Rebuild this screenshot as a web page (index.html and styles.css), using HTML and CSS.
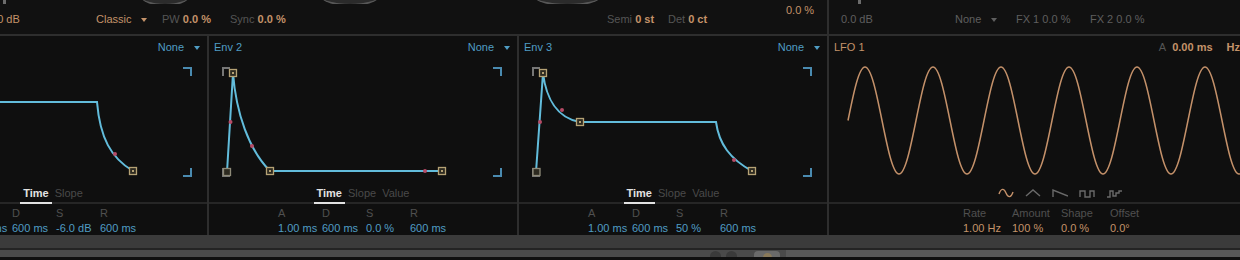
FILE: index.html
```html
<!DOCTYPE html>
<html lang="en">
<head>
<meta charset="UTF-8">
<meta name="viewport" content="width=device-width, initial-scale=1.0">
<title>Wavetable - Modulation</title>
<link rel="stylesheet" href="styles.css">
</head>
<body>
  <div class="top">
    <div class="osc">
      <div class="strip">
        <span class="tick"></span>
        <span class="knob knob-a"></span>
        <span class="knob knob-b"></span>
        <span class="knob knob-c"></span>
      </div>
      <div class="osc-row">
        <span class="val">0.0 dB</span>
        <span class="val">Classic<i class="arrow"></i></span>
        <span><span class="lbl">PW</span> <b class="val">0.0 %</b></span>
        <span><span class="lbl">Sync</span> <b class="val">0.0 %</b></span>
        <span><span class="lbl">Semi</span> <b class="val">0 st</b></span>
        <span><span class="lbl">Det</span> <b class="val">0 ct</b></span>
        <span class="val raised">0.0 %</span>
      </div>
    </div>
    <div class="fx">
      <div class="strip"><span class="tick tick-fx"></span></div>
      <div class="fx-row">
        <span>0.0 dB</span>
        <span>None<i class="arrow"></i></span>
        <span>FX 1 0.0 %</span>
        <span>FX 2 0.0 %</span>
      </div>
    </div>
  </div>

  <div class="panels">
    <!-- Env 1 (left part is outside the view) -->
    <section class="panel">
      <div class="panel-head">
        <span class="title">Env 1</span>
        <span class="menu">None<i class="arrow"></i></span>
      </div>
      <svg class="graph" width="308" height="126" viewBox="0 0 308 126">
        <polyline class="bracket loop" points="14,18 14,10 21,10"/>
        <polyline class="bracket loop" points="14,110 14,118 21,118"/>
        <polyline class="bracket" points="284,10 292,10 292,18"/>
        <polyline class="bracket" points="292,110 292,118 284,118"/>
        <path class="env-line" d="M18,114 L24,15 C27,35 40,42 61,44 L198,44 C201,80 212,100 234,113"/>
        <circle class="dot" cx="216" cy="96" r="2"/>
        <rect class="node" x="230.5" y="109.5" width="7" height="7"/>
        <rect class="node-in" x="233" y="112" width="2" height="2"/>
      </svg>
      <div class="tabs">
        <span class="tab on">Time</span>
        <span class="tab">Slope</span>
      </div>
      <div class="params">
        <div class="param"><span class="lbl">A</span><span class="num">1.00 ms</span></div>
        <div class="param"><span class="lbl">D</span><span class="num">600 ms</span></div>
        <div class="param"><span class="lbl">S</span><span class="num">-6.0 dB</span></div>
        <div class="param"><span class="lbl">R</span><span class="num">600 ms</span></div>
      </div>
    </section>

    <section class="panel">
      <div class="panel-head">
        <span class="title">Env 2</span>
        <span class="menu">None<i class="arrow"></i></span>
      </div>
      <svg class="graph" width="308" height="126" viewBox="0 0 308 126">
        <polyline class="bracket loop" points="14,18 14,10 21,10"/>
        <polyline class="bracket loop" points="14,110 14,118 21,118"/>
        <polyline class="bracket" points="284,10 292,10 292,18"/>
        <polyline class="bracket" points="292,110 292,118 284,118"/>
        <path class="env-line" d="M18,114 L24,15 C27,55 40,92 61,113 L233,113"/>
        <circle class="dot" cx="21.5" cy="64" r="2"/>
        <circle class="dot" cx="43" cy="88" r="2"/>
        <circle class="dot" cx="216" cy="113" r="2"/>
        <rect class="node start" x="14.5" y="110.5" width="7" height="7"/>
        <rect class="node" x="20.5" y="11.5" width="7" height="7"/>
        <rect class="node-in" x="23" y="14" width="2" height="2"/>
        <rect class="node" x="57.5" y="109.5" width="7" height="7"/>
        <rect class="node-in" x="60" y="112" width="2" height="2"/>
        <rect class="node" x="229.5" y="109.5" width="7" height="7"/>
        <rect class="node-in" x="232" y="112" width="2" height="2"/>
      </svg>
      <div class="tabs">
        <span class="tab on">Time</span>
        <span class="tab">Slope</span>
        <span class="tab">Value</span>
      </div>
      <div class="params">
        <div class="param"><span class="lbl">A</span><span class="num">1.00 ms</span></div>
        <div class="param"><span class="lbl">D</span><span class="num">600 ms</span></div>
        <div class="param"><span class="lbl">S</span><span class="num">0.0 %</span></div>
        <div class="param"><span class="lbl">R</span><span class="num">600 ms</span></div>
      </div>
    </section>

    <section class="panel">
      <div class="panel-head">
        <span class="title">Env 3</span>
        <span class="menu">None<i class="arrow"></i></span>
      </div>
      <svg class="graph" width="308" height="126" viewBox="0 0 308 126">
        <polyline class="bracket loop" points="14,18 14,10 21,10"/>
        <polyline class="bracket loop" points="14,110 14,118 21,118"/>
        <polyline class="bracket" points="284,10 292,10 292,18"/>
        <polyline class="bracket" points="292,110 292,118 284,118"/>
        <path class="env-line" d="M17,114 L24,15 C27,40 38,60 61,64 L197,64 C200,86 211,101 233,113"/>
        <circle class="dot" cx="21" cy="64" r="2"/>
        <circle class="dot" cx="43" cy="52" r="2"/>
        <circle class="dot" cx="215" cy="102" r="2"/>
        <rect class="node start" x="14" y="110.5" width="7" height="7"/>
        <rect class="node" x="20.5" y="11.5" width="7" height="7"/>
        <rect class="node-in" x="23" y="14" width="2" height="2"/>
        <rect class="node" x="57.5" y="60.5" width="7" height="7"/>
        <rect class="node-in" x="60" y="63" width="2" height="2"/>
        <rect class="node" x="229.5" y="109.5" width="7" height="7"/>
        <rect class="node-in" x="232" y="112" width="2" height="2"/>
      </svg>
      <div class="tabs">
        <span class="tab on">Time</span>
        <span class="tab">Slope</span>
        <span class="tab">Value</span>
      </div>
      <div class="params">
        <div class="param"><span class="lbl">A</span><span class="num">1.00 ms</span></div>
        <div class="param"><span class="lbl">D</span><span class="num">600 ms</span></div>
        <div class="param"><span class="lbl">S</span><span class="num">50 %</span></div>
        <div class="param"><span class="lbl">R</span><span class="num">600 ms</span></div>
      </div>
    </section>

    <section class="panel lfo">
      <div class="panel-head">
        <span class="title">LFO 1</span>
        <span class="lfo-attack">
          <span class="lbl">A</span>
          <b class="val">0.00 ms</b>
          <b class="val hz">Hz</b>
        </span>
      </div>
      <svg class="graph" width="450" height="126" viewBox="0 0 450 126">
        <path class="wave" d="M19,62.5 C24.54,35.1 29.85,9 36,9 S47.46,35.1 53,62.5 S63.85,116 70,116 S81.46,89.9 87,62.5
          S97.85,9 104,9 S115.46,35.1 121,62.5 S131.85,116 138,116 S149.46,89.9 155,62.5
          S165.85,9 172,9 S183.46,35.1 189,62.5 S199.85,116 206,116 S217.46,89.9 223,62.5
          S233.85,9 240,9 S251.46,35.1 257,62.5 S267.85,116 274,116 S285.46,89.9 291,62.5
          S301.85,9 308,9 S319.46,35.1 325,62.5 S335.85,116 342,116 S353.46,89.9 359,62.5
          S369.85,9 376,9 S387.46,35.1 393,62.5 S403.85,116 410,116 S421.46,89.9 427,62.5"/>
      </svg>
      <div class="tabs shapes">
        <svg class="shape on" width="16" height="10" viewBox="0 0 16 10"><path d="M1,6 C3,0 6,0 8,5 S13,10 15,4"/></svg>
        <svg class="shape" width="16" height="10" viewBox="0 0 16 10"><path d="M1,8 L8,2 L15,8"/></svg>
        <svg class="shape" width="16" height="10" viewBox="0 0 16 10"><path d="M1,9 V2 L16,8"/></svg>
        <svg class="shape" width="16" height="10" viewBox="0 0 16 10"><path d="M1,9 V3 H6 V9 H11 V3 H15 V9"/></svg>
        <svg class="shape" width="16" height="10" viewBox="0 0 16 10"><path d="M1,9 H4 V3 H7 V8 H10 V5 H13 V3 H16"/></svg>
      </div>
      <div class="params lfo-params">
        <div class="param"><span class="lbl">Rate</span><span class="num">1.00 Hz</span></div>
        <div class="param"><span class="lbl">Amount</span><span class="num">100 %</span></div>
        <div class="param"><span class="lbl">Shape</span><span class="num">0.0 %</span></div>
        <div class="param"><span class="lbl">Offset</span><span class="num">0.0°</span></div>
      </div>
    </section>
  </div>

  <div class="footer">
    <div class="footer-top"></div>
    <div class="footer-bottom">
      <span class="dot-btn"></span>
      <span class="dot-btn"></span>
      <span class="pill"><span class="pill-dot"></span></span>
      <span class="track"></span>
    </div>
  </div>
</body>
</html>
```

FILE: styles.css
```css
body {
  margin: 0;
  width: 1240px;
  height: 260px;
  overflow: hidden;
  background: #0f0f0f;
  font-family: "Liberation Sans", Arial, sans-serif;
  font-size: 11px;
  line-height: 13px;
  color: #5c5c5c;
}

b {
  font-weight: bold;
}

.arrow {
  display: inline-block;
  width: 0;
  height: 0;
  margin-left: 10px;
  border-left: 3px solid transparent;
  border-right: 3px solid transparent;
  border-top: 4px solid currentColor;
  vertical-align: middle;
}

/* Top strip (oscillator + mixer rows) */
.top {
  display: grid;
  grid-template-columns: 827px 1fr;
  column-gap: 2px;
  height: 34px;
  background: #2e2e2e;
  border-bottom: 2px solid #2e2e2e;
}

.osc,
.fx {
  background: #111;
  overflow: hidden;
}

.strip {
  display: flex;
  height: 4px;
  overflow: hidden;
}

.tick {
  width: 3px;
  height: 6px;
  margin-left: 3px;
  margin-top: -1px;
  border-radius: 1px;
  background: #6c6c6c;
}

.tick-fx {
  margin-left: 29px;
}

.knob {
  height: 20px;
  margin-top: -16px;
  border-radius: 50%;
  background: #2b2b2b;
  border-bottom: 2px solid #585858;
}

.knob-a { width: 50px; margin-left: 134px; }
.knob-b { width: 60px; margin-left: 130px; }
.knob-c { width: 69px; margin-left: 153px; }

.osc-row {
  display: grid;
  grid-template-columns: 108px 66px 68px 377px 61px 118px auto;
  align-items: center;
  height: 30px;
  margin-left: -12px;
  white-space: nowrap;
}

.val {
  color: #c4936a;
}

.lbl {
  color: #555;
}

.raised {
  align-self: start;
  margin-top: 0;
}

.fx-row {
  display: grid;
  grid-template-columns: 114px 61px 74px auto;
  align-items: center;
  height: 30px;
  padding-left: 12px;
  color: #5f5f5f;
  white-space: nowrap;
}

/* Modulation panels */
.panels {
  display: grid;
  grid-template-columns: 308px 308px 308px 450px;
  column-gap: 2px;
  margin-left: -101px;
  background: #2e2e2e;
}

.panel {
  display: flex;
  flex-direction: column;
  background: #0f0f0f;
}

.panel-head {
  display: flex;
  align-items: center;
  justify-content: space-between;
  height: 22px;
  padding: 0 7px 0 5px;
}

.title {
  color: #4f9dc4;
}

.menu {
  color: #4f9dc4;
}

.graph {
  display: block;
}

.bracket {
  fill: none;
  stroke: #4a8bb0;
  stroke-width: 2;
}

.bracket.loop {
  stroke: #767676;
}

.env-line {
  fill: none;
  stroke: #62bcdb;
  stroke-width: 2;
}

.dot {
  fill: #b64b66;
}

.node {
  fill: #2d2a20;
  stroke: #b5a275;
  stroke-width: 1.3;
}

.node.start {
  stroke: #8e8a78;
}

.node-in {
  fill: #b5a275;
}

.tabs {
  display: flex;
  justify-content: center;
  height: 18px;
  border-bottom: 2px solid #262626;
}

.tab {
  padding: 3px 3px 0;
  color: #4a4a4a;
}

.tab.on {
  color: #e2e2e2;
  font-weight: bold;
  border-bottom: 2px solid #e2e2e2;
  margin-bottom: -2px;
}

.params {
  display: flex;
  justify-content: center;
  padding: 2px 0 0 6px;
}

.param {
  display: flex;
  flex-direction: column;
  width: 44px;
  white-space: nowrap;
}

.param .lbl {
  line-height: 14px;
  color: #505050;
}

.param .num {
  line-height: 14px;
  margin-top: 1px;
  color: #4f9dc4;
}

/* LFO */
.lfo .title {
  color: #c4936a;
}

.lfo .panel-head {
  padding-right: 39px;
}

.lfo-attack {
  display: flex;
  white-space: nowrap;
}

.lfo-attack .val {
  margin-left: 6px;
}

.lfo-attack .hz {
  margin-left: 14px;
}

.wave {
  fill: none;
  stroke: #c4916a;
  stroke-width: 1.5;
}

.shapes {
  justify-content: flex-start;
  align-items: center;
  gap: 11px;
  padding-left: 169px;
}

.shape path {
  fill: none;
  stroke: #6a6a6a;
  stroke-width: 1.4;
}

.shape.on path {
  stroke: #c4916a;
}

.lfo-params {
  justify-content: flex-start;
  padding-left: 134px;
}

.lfo-params .param {
  width: 49px;
}

.lfo-params .num {
  color: #c4936a;
}

/* Bottom bar */
.footer {
  height: 22px;
}

.footer-top {
  height: 13px;
  background: #3b3b3b;
  border-bottom: 2px solid #242424;
}

.footer-bottom {
  display: flex;
  align-items: center;
  height: 7px;
  background: #4a4a4a;
  overflow: hidden;
}

.dot-btn {
  width: 11px;
  height: 11px;
  margin-left: 5px;
  margin-top: 6px;
  border-radius: 50%;
  background: #3a3a3a;
}

.dot-btn:first-child {
  margin-left: 710px;
}

.pill {
  display: flex;
  justify-content: center;
  width: 26px;
  height: 12px;
  margin-left: 17px;
  margin-top: 6px;
  border-radius: 4px;
  background: #6a6a6a;
}

.pill-dot {
  width: 9px;
  height: 9px;
  margin-top: 2px;
  border-radius: 50%;
  background: #8a7a5a;
}

.track {
  flex: 1;
  height: 7px;
  margin-left: 6px;
  background: #585858;
}
```
